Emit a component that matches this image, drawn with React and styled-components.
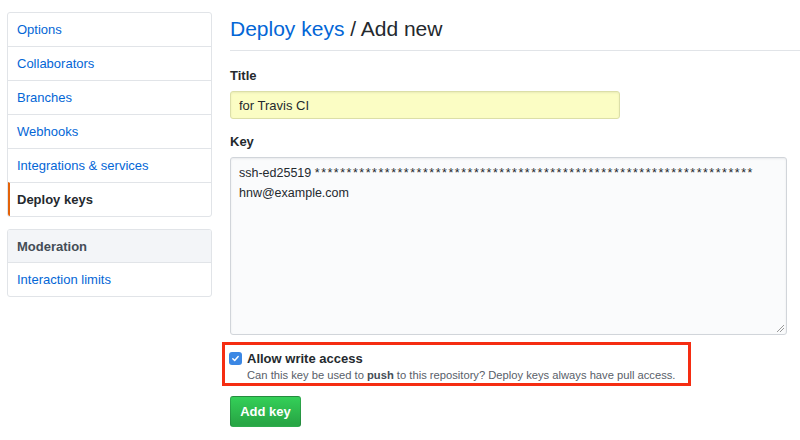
import React from "react";
import styled, { createGlobalStyle } from "styled-components";

const menuItems = [
  { label: "Options" },
  { label: "Collaborators" },
  { label: "Branches" },
  { label: "Webhooks" },
  { label: "Integrations & services" },
  { label: "Deploy keys", selected: true },
];

const App = () => {
  return (
    <>
      <GlobalStyle />
      <Page>
        <Sidebar>
          <Menu>
            {menuItems.map((item) => (
              <MenuItem key={item.label} selected={item.selected}>
                {item.label}
              </MenuItem>
            ))}
          </Menu>
          <Menu>
            <MenuHeading>Moderation</MenuHeading>
            <MenuItem>Interaction limits</MenuItem>
          </Menu>
        </Sidebar>
        <Main>
          <Heading>
            <HeadingLink>Deploy keys</HeadingLink> / Add new
          </Heading>
          <Field top={17}>
            <Label>Title</Label>
            <TitleInput type="text" defaultValue="for Travis CI" />
          </Field>
          <Field top={15}>
            <Label>Key</Label>
            <KeyBox>
              <span>ssh-ed25519 </span>
              <Stars>{"*".repeat(69)}</Stars>
              <br />
              hnw@example.com
              <Grip />
            </KeyBox>
          </Field>
          <Highlight>
            <Checkbox>
              <svg width="9" height="9" viewBox="0 0 10 10">
                <path
                  d="M2 5.2 L4.1 7.3 L8 2.8"
                  fill="none"
                  stroke="#fff"
                  strokeWidth="1.6"
                  strokeLinecap="round"
                  strokeLinejoin="round"
                />
              </svg>
            </Checkbox>
            <CheckText>
              <CheckTitle>Allow write access</CheckTitle>
              <Note>
                Can this key be used to <b>push</b> to this repository? Deploy
                keys always have pull access.
              </Note>
            </CheckText>
          </Highlight>
          <Button>Add key</Button>
        </Main>
      </Page>
    </>
  );
};

const GlobalStyle = createGlobalStyle`
  body {
    margin: 0;
    background: #fff;
    font-family: "Liberation Sans", Arial, sans-serif;
    color: #24292e;
  }
`;

const Page = styled.div`
  display: flex;
  align-items: flex-start;
  padding: 12px 0 0 7px;
  width: 793px;
  height: 428px;
  overflow: hidden;
`;

const Sidebar = styled.div`
  width: 205px;
  flex-shrink: 0;
  display: flex;
  flex-direction: column;
  gap: 12px;
`;

const Menu = styled.div`
  border: 1px solid #e1e4e8;
  border-radius: 3px;
  overflow: hidden;
`;

const MenuItem = styled.div`
  height: 33px;
  display: flex;
  align-items: center;
  padding-left: ${(p) => (p.selected ? "7px" : "9px")};
  border-left: ${(p) => (p.selected ? "2px solid #e36209" : "none")};
  font-size: 13px;
  font-weight: ${(p) => (p.selected ? 700 : 400)};
  color: ${(p) => (p.selected ? "#24292e" : "#0366d6")};
  & + & {
    border-top: 1px solid #e1e4e8;
  }
`;

const MenuHeading = styled.div`
  height: 32px;
  display: flex;
  align-items: center;
  padding-left: 9px;
  background: #f3f5f8;
  border-bottom: 1px solid #e1e4e8;
  font-size: 13px;
  font-weight: 700;
  color: #444d56;
`;

const Main = styled.div`
  flex: 1;
  margin-left: 18px;
  margin-top: 1px;
  display: flex;
  flex-direction: column;
  align-items: flex-start;
`;

const Heading = styled.h2`
  margin: 0;
  width: 100%;
  height: 37px;
  font-size: 21px;
  font-weight: 400;
  line-height: 31px;
  border-bottom: 1px solid #e1e4e8;
  color: #24292e;
`;

const HeadingLink = styled.span`
  color: #0366d6;
`;

const Field = styled.div`
  display: flex;
  flex-direction: column;
  width: 557px;
  margin-top: ${(p) => p.top}px;
`;

const Label = styled.label`
  font-size: 13px;
  font-weight: 700;
  line-height: 16px;
  margin-bottom: 7px;
`;

const TitleInput = styled.input`
  width: 390px;
  height: 28px;
  box-sizing: border-box;
  padding: 0 8px;
  border: 1px solid #dcdfa8;
  border-radius: 3px;
  background: #fbfdc4;
  font-family: "Liberation Sans", Arial, sans-serif;
  font-size: 13px;
  color: #24292e;
  outline: none;
  box-shadow: inset 0 1px 2px rgba(27, 31, 35, 0.075);
`;

const KeyBox = styled.div`
  position: relative;
  height: 178px;
  box-sizing: border-box;
  padding: 5px 8px;
  border: 1px solid #d1d5da;
  border-radius: 3px;
  background: #fafbfc;
  font-size: 12.5px;
  line-height: 20px;
  color: #24292e;
  box-shadow: inset 0 1px 2px rgba(27, 31, 35, 0.075);
`;

const Stars = styled.span`
  letter-spacing: 1.5px;
`;

const Grip = styled.span`
  position: absolute;
  right: 2px;
  bottom: 2px;
  width: 7px;
  height: 7px;
  background: linear-gradient(
    135deg,
    transparent 45%,
    #999 45%,
    #999 52%,
    transparent 52%,
    transparent 70%,
    #999 70%,
    #999 77%,
    transparent 77%
  );
`;

const Highlight = styled.div`
  display: flex;
  align-items: flex-start;
  gap: 5px;
  margin: 7px 0 0 -8px;
  width: 469px;
  height: 44px;
  box-sizing: border-box;
  padding: 5px 0 0 4px;
  border: 3px solid #f52d12;
`;

const Checkbox = styled.span`
  width: 13px;
  height: 13px;
  margin-top: 2px;
  border-radius: 3px;
  background: #3b87e4;
  display: flex;
  align-items: center;
  justify-content: center;
`;

const CheckText = styled.div`
  display: flex;
  flex-direction: column;
`;

const CheckTitle = styled.span`
  font-size: 13px;
  font-weight: 700;
  line-height: 17px;
`;

const Note = styled.span`
  font-size: 11.2px;
  line-height: 17px;
  white-space: nowrap;
  color: #586069;
  b {
    color: #444d56;
  }
`;

const Button = styled.button`
  margin-top: 10px;
  width: 71px;
  height: 31px;
  border: 1px solid rgba(27, 31, 35, 0.2);
  border-radius: 3px;
  background: linear-gradient(180deg, #34d058, #28a745 90%);
  color: #fff;
  font-family: "Liberation Sans", Arial, sans-serif;
  font-size: 13px;
  font-weight: 700;
  padding: 0;
`;

export default App;
